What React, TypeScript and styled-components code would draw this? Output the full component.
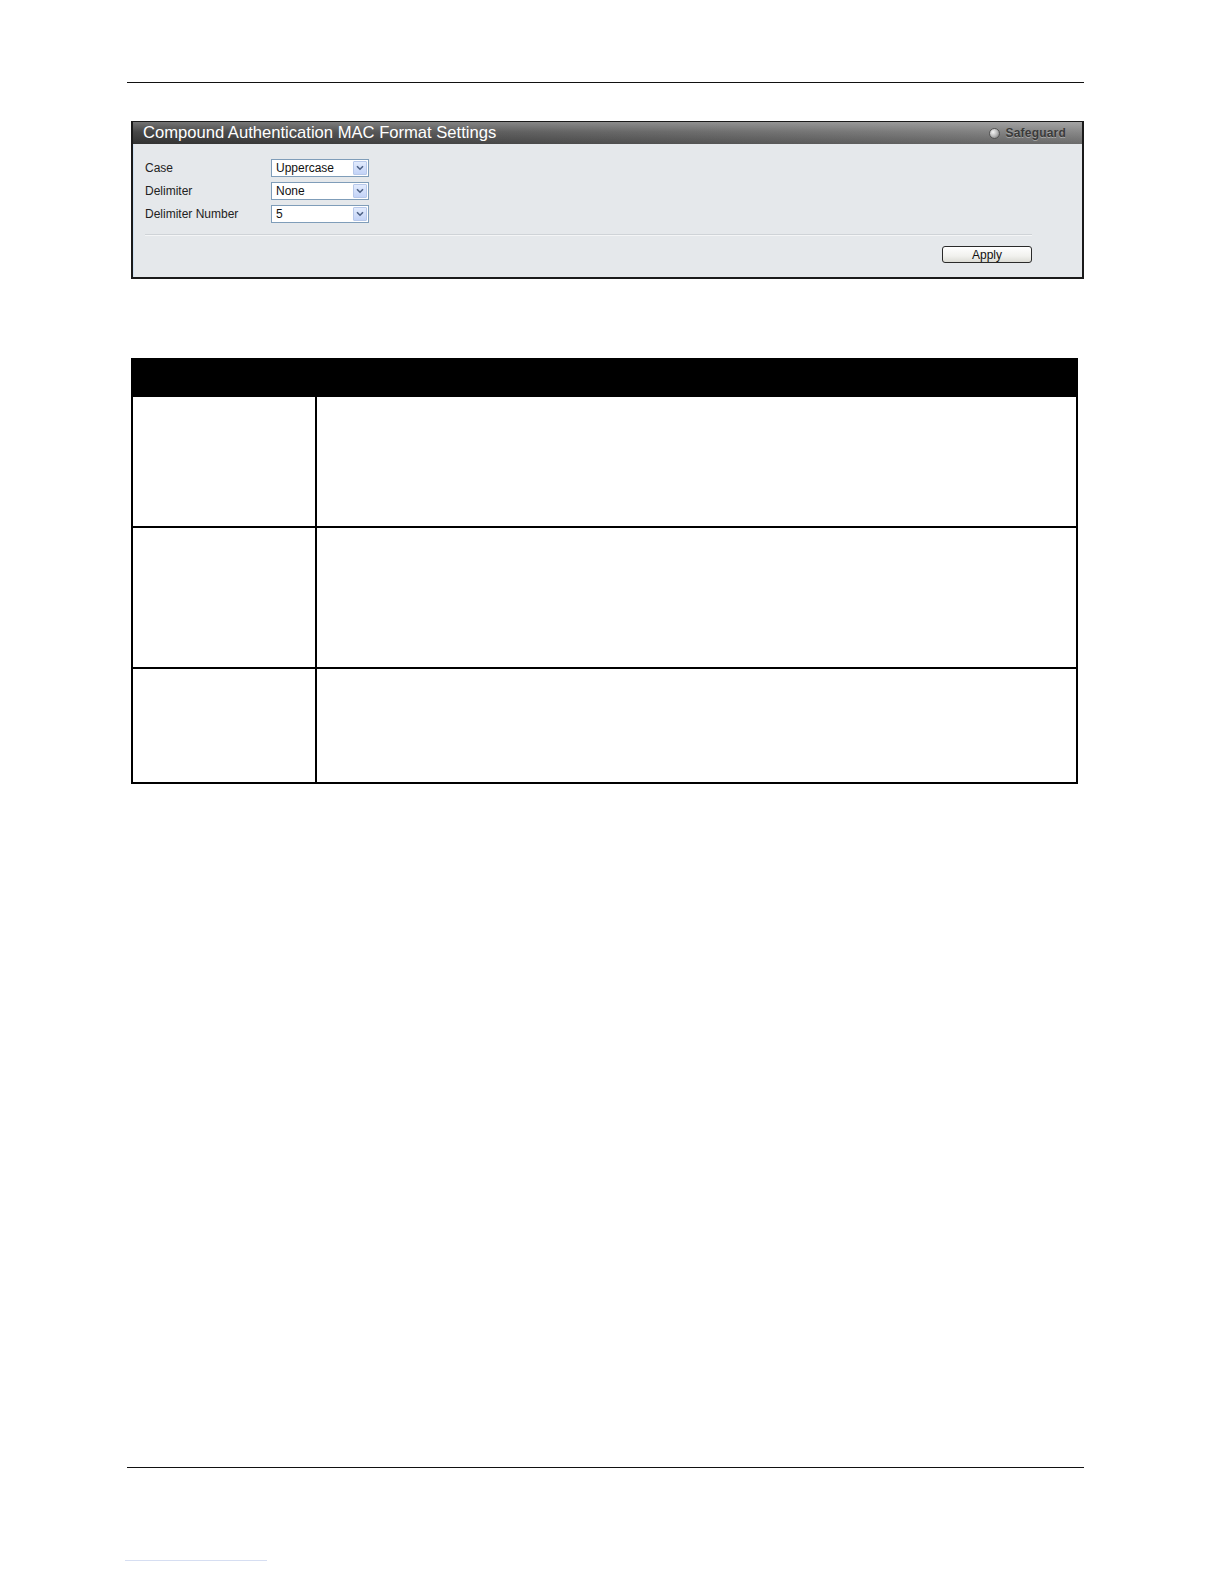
import React from "react";
import styled, { createGlobalStyle } from "styled-components";

const Global = createGlobalStyle`
  html, body { margin: 0; padding: 0; background: #ffffff; overflow: hidden; }
  body { font-family: "Liberation Sans", Arial, sans-serif; }
`;

const Page = styled.div`
  width: 1224px;
  height: 1584px;
  overflow: hidden;
  padding-top: 82px;
  box-sizing: border-box;
  display: flex;
  flex-direction: column;
`;

const Rule = styled.div<{ $mt?: number }>`
  flex: none;
  margin-left: 127px;
  margin-top: ${(p) => p.$mt ?? 0}px;
  width: 957px;
  height: 1px;
  background: #111;
`;

const Panel = styled.div`
  flex: none;
  margin-top: 38px;
  margin-left: 131px;
  width: 953px;
  box-sizing: border-box;
  border: 2px solid #1a1a1a;
  border-top-width: 1px;
  background: #e5e8eb;
  box-shadow: inset 1px 0 0 #cfe0f0;
`;

const TitleBar = styled.div`
  height: 22px;
  display: flex;
  align-items: center;
  justify-content: space-between;
  padding: 0 16px 0 10px;
  background:
    linear-gradient(to bottom, rgba(255, 255, 255, 0.28) 0%, rgba(255, 255, 255, 0.05) 45%, rgba(0, 0, 0, 0.18) 100%),
    linear-gradient(to right, #3c3c3c 0%, #585858 40%, #707070 75%, #828282 100%);
`;

const Title = styled.span`
  color: #ffffff;
  font-size: 16.6px;
`;

const Safeguard = styled.span`
  display: flex;
  align-items: center;
  gap: 6px;
  color: #3a3a3a;
  font-size: 12px;
  font-weight: bold;
  text-shadow: 0 1px 0 rgba(255, 255, 255, 0.35);
  letter-spacing: 0.2px;
`;

const Led = styled.span`
  width: 9px;
  height: 9px;
  border-radius: 50%;
  background: radial-gradient(circle at 35% 35%, #f4f4f4 0%, #b8b8b8 50%, #6a6a6a 100%);
  border: 1px solid #555;
`;

const Body = styled.div`
  padding: 12px 50px 14px 12px;
  display: flex;
  flex-direction: column;
`;

const Row = styled.div`
  display: flex;
  align-items: center;
  height: 23px;
`;

const Label = styled.span`
  width: 126px;
  font-size: 12px;
  color: #222;
`;

const Select = styled.div`
  width: 98px;
  height: 18px;
  box-sizing: border-box;
  border: 1px solid #7f9db9;
  background: #fff;
  display: flex;
  align-items: center;
  justify-content: space-between;
  padding: 1px;
`;

const SelectText = styled.span`
  font-size: 12px;
  color: #111;
  padding-left: 3px;
`;

const Arrow = styled.span`
  width: 14px;
  height: 14px;
  box-sizing: border-box;
  border: 1px solid #b7c8ea;
  border-radius: 1px;
  background: linear-gradient(to bottom, #e2ebfd 0%, #c3d3f7 100%);
  display: flex;
  align-items: center;
  justify-content: center;
`;

const Separator = styled.div`
  margin-top: 9px;
  height: 1px;
  background: #cfd3d7;
  border-bottom: 1px solid #f4f5f6;
`;

const ButtonRow = styled.div`
  display: flex;
  justify-content: flex-end;
  margin-top: 10px;
`;

const Button = styled.div`
  width: 90px;
  height: 17px;
  box-sizing: border-box;
  border: 1px solid #2a2a2a;
  border-radius: 3px;
  background: linear-gradient(to bottom, #ffffff 0%, #f1f1ee 60%, #dcdcd6 100%);
  font-size: 12px;
  color: #111;
  display: flex;
  align-items: center;
  justify-content: center;
`;

const Table = styled.div`
  flex: none;
  margin-top: 79px;
  margin-left: 131px;
  width: 947px;
  box-sizing: border-box;
  border: 2px solid #000;
  border-top: none;
  display: grid;
  grid-template-columns: 182px 1fr;
`;

const Header = styled.div`
  grid-column: 1 / span 2;
  height: 39px;
  background: #000;
  margin: 0 -2px;
`;

const Cell = styled.div<{ $h: number; $first?: boolean; $last?: boolean }>`
  height: ${(p) => p.$h}px;
  box-sizing: border-box;
  border-top: ${(p) => (p.$first ? "none" : "2px solid #000")};
  border-left: ${(p) => (p.$last ? "2px solid #000" : "none")};
`;

const Underline = styled.div`
  flex: none;
  margin-top: 92px;
  margin-left: 125px;
  width: 142px;
  height: 1px;
  background: #d6def2;
`;

const Chevron = () => (
  <svg width="8" height="6" viewBox="0 0 8 6">
    <path d="M1 1.2 L4 4.2 L7 1.2" fill="none" stroke="#4d6185" strokeWidth="1.6" />
  </svg>
);

const rows = [
  { label: "Case", value: "Uppercase" },
  { label: "Delimiter", value: "None" },
  { label: "Delimiter Number", value: "5" },
];

const tableRows = [129, 141, 115];

export default function App() {
  return (
    <>
      <Global />
      <Page>
        <Rule />
        <Panel>
          <TitleBar>
            <Title>Compound Authentication MAC Format Settings</Title>
            <Safeguard>
              <Led />
              Safeguard
            </Safeguard>
          </TitleBar>
          <Body>
            {rows.map((r) => (
              <Row key={r.label}>
                <Label>{r.label}</Label>
                <Select>
                  <SelectText>{r.value}</SelectText>
                  <Arrow>
                    <Chevron />
                  </Arrow>
                </Select>
              </Row>
            ))}
            <Separator />
            <ButtonRow>
              <Button>Apply</Button>
            </ButtonRow>
          </Body>
        </Panel>
        <Table>
          <Header />
          {tableRows.map((h, i) => (
            <React.Fragment key={i}>
              <Cell $h={h} $first={i === 0} />
              <Cell $h={h} $first={i === 0} $last />
            </React.Fragment>
          ))}
        </Table>
        <Rule $mt={683} />
        <Underline />
      </Page>
    </>
  );
}
